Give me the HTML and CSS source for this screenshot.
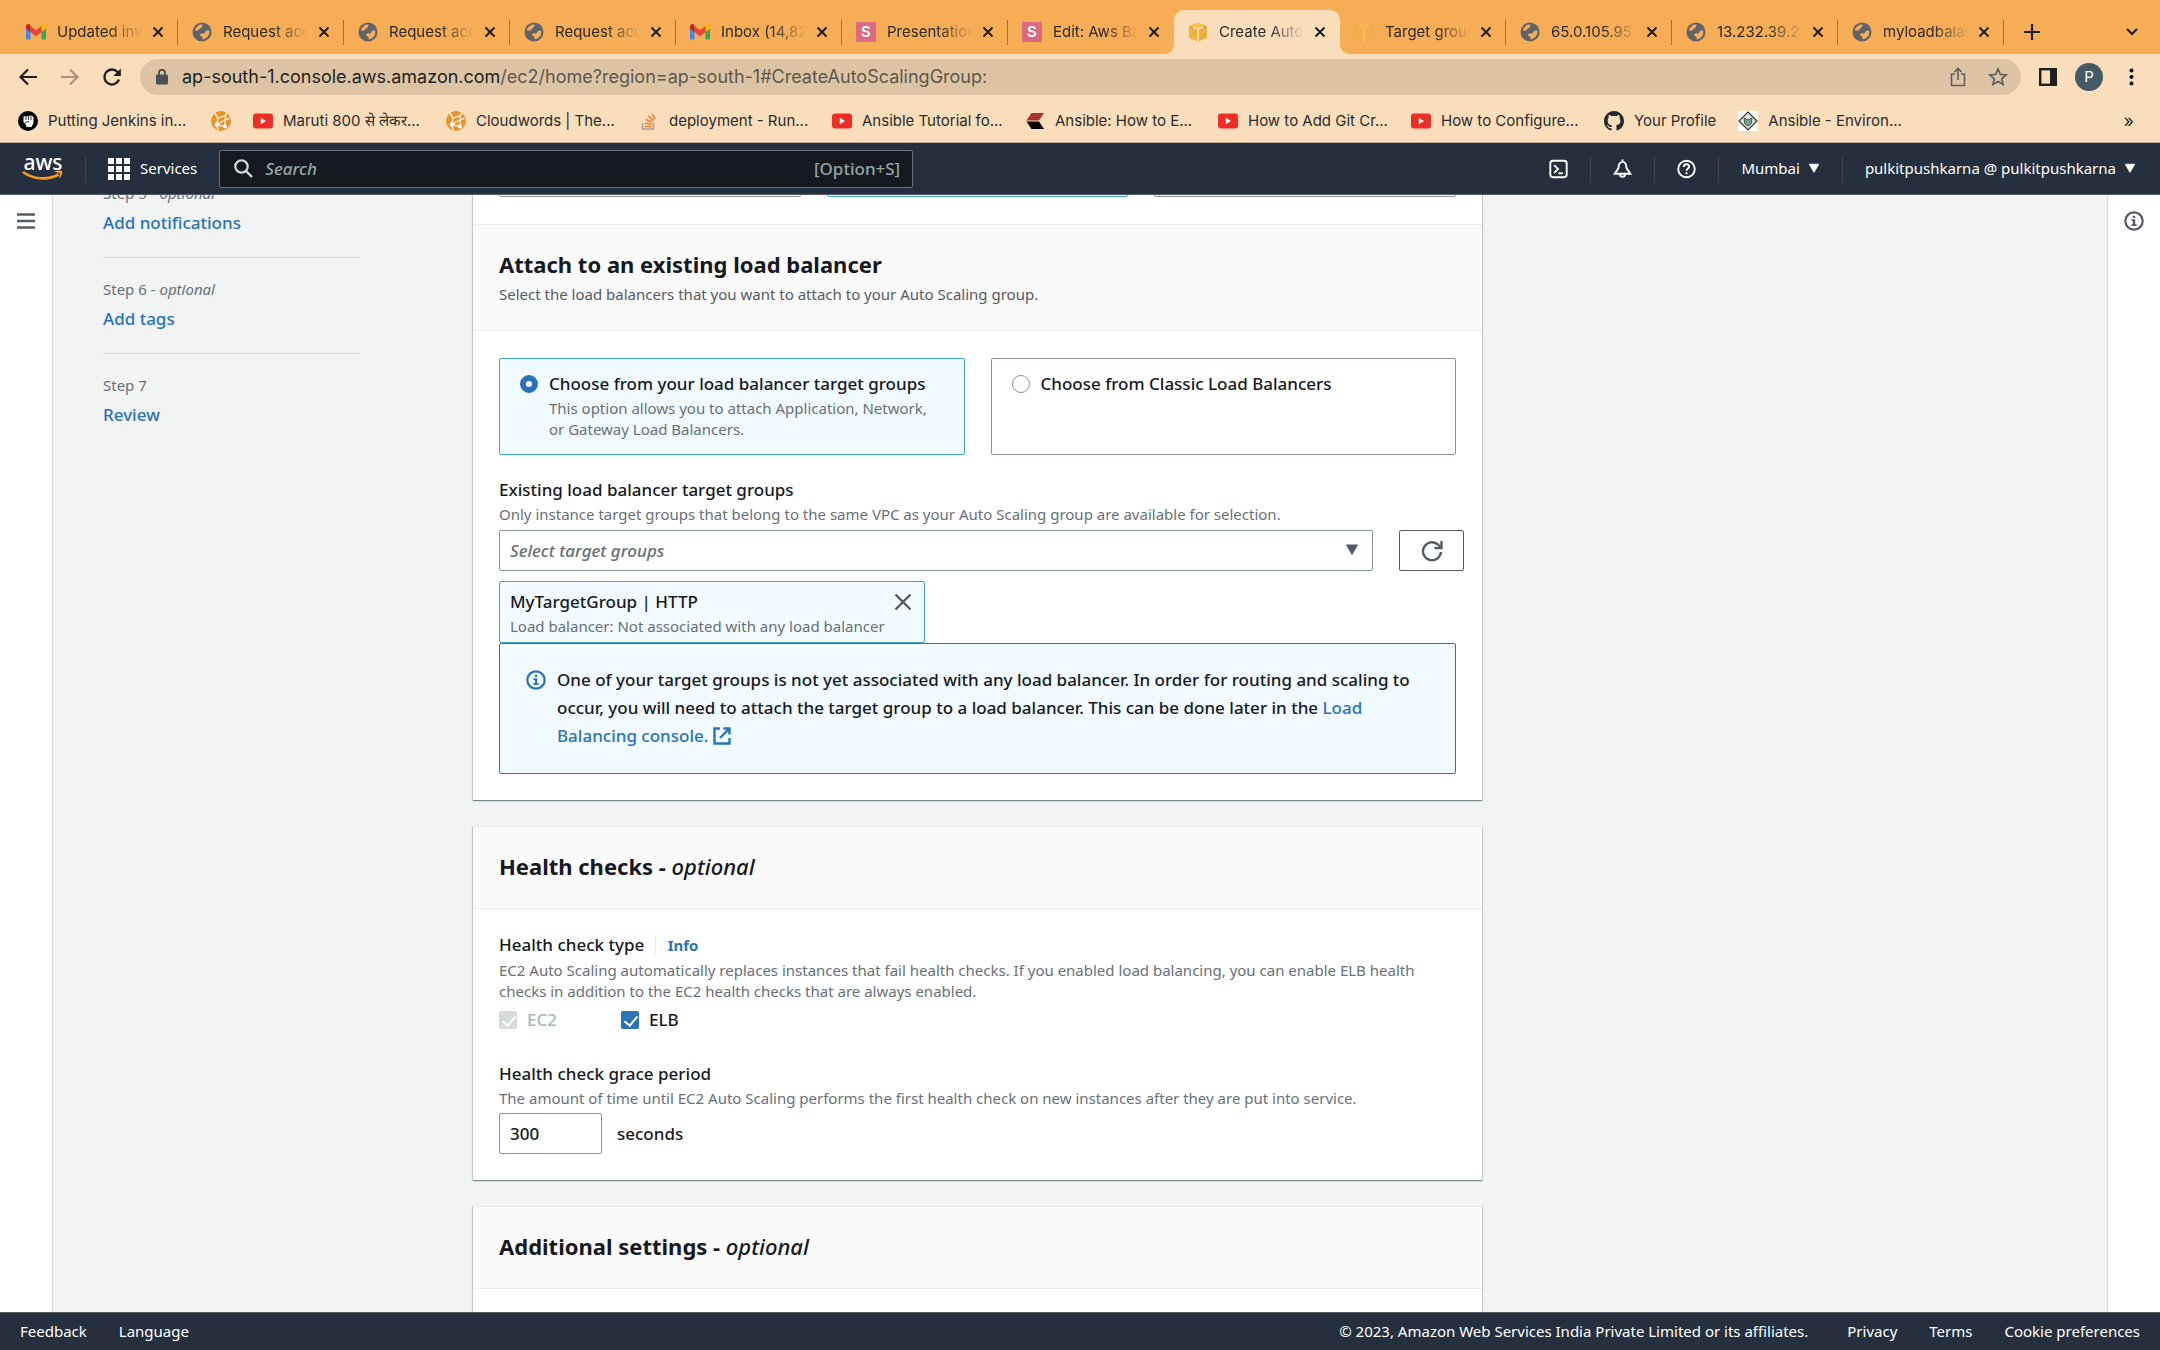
FILE: index.html
```html
<!DOCTYPE html>
<html lang="en">
<head>
    <meta charset="UTF-8">
    <meta name="viewport" content="width=device-width, initial-scale=1.0">
    <title>Create Auto Scaling group</title>
    <link rel="stylesheet" href="styles.css">
</head>
<body>
    <!-- shared icons -->
    <svg class="sprite" width="0" height="0">
        <symbol id="gmail" viewBox="0 0 20 16">
            <path d="M0 2.5V14a1.5 1.5 0 0 0 1.500 1.500H4.500V6z" fill="#4285f4"/>
            <path d="M20 2.500V14a1.500 1.500 0 0 1-1.500 1.500H15.500V6z" fill="#34a853"/>
            <path d="M15.500 2.500V8L20 4.600V2.500C20 .3 17.600-.6 16 .7z" fill="#fbbc04"/>
            <path d="M4.500 8V2L10 6.200 15.500 2v6L10 12.200z" fill="#ea4335"/>
            <path d="M0 2.500V4.600L4.500 8V2L4 .7C2.400-.6 0 .3 0 2.500z" fill="#c5221f"/>
        </symbol>
        <symbol id="globe" viewBox="0 0 20 20">
            <circle cx="10" cy="10" r="9.500" fill="#5f6368"/>
            <path d="M3 7.500c1.200-3 3.800-5 7-5 .8 0 1 .6.400 1.200-.9.900-.2 1.300-1.200 2.200-.8.700-1.900.4-2.200 1.500-.2.900-1 1.300-2 1.100-.9-.2-1.300-.1-2 .2z" fill="#f6ad55"/>
            <path d="M17.300 9c.5 3.700-2 7.300-6 8.200-1 .2-1.200-.5-.8-1.300.4-.9-.3-1.400-1.300-1.600-1.100-.3-1.300-1.300-.9-2.100.5-.9 1.700-1.100 2.800-.8 1 .3 1.600-.1 1.900-.9.400-1.200 1.200-1.900 2.400-2 .7-.1 1.500-.1 1.900.5z" fill="#f6ad55"/>
        </symbol>
        <symbol id="close" viewBox="0 0 12 12">
            <path d="M1.500 1.500l9 9M10.500 1.500l-9 9" stroke="#1f1f1f" stroke-width="2" fill="none"/>
        </symbol>
        <symbol id="cube" viewBox="0 0 20 20">
            <path d="M1 4.500l4-2v15l-4-2zM19 4.500l-4-2v15l4-2z" fill="#e2a336"/>
            <path d="M1 5l8.500 2.500v12L1 15.500zM19 5l-8.500 2.500v12l8.500-4z" fill="#ecb23f"/>
            <path d="M2 3.600L10 .5l8 3.100L10 6.300z" fill="#f3c14f"/>
            <path d="M10 7v12.500" stroke="#fadebb" stroke-width="1"/>
        </symbol>
        <symbol id="youtube" viewBox="0 0 20 16">
            <rect width="20" height="15" y=".5" rx="3" fill="#ee2d24"/>
            <path d="M7.800 4.800v6.400L13 8z" fill="#fff"/>
        </symbol>
        <symbol id="cloudwords" viewBox="0 0 20 20">
            <circle cx="10" cy="10" r="10" fill="#e3962f"/>
            <path d="M4 2.500L7 7l7-2 2-3M14 5l.5 3.500 4-1M7 7l-1 6.500M6 13.500L14.500 8.500M6 13.500l7.500 2L14.500 8.500M6 13.500l1 5.500" stroke="#fbe9d0" stroke-width="1.400" fill="none"/>
            <circle cx="6" cy="13.500" r="2.200" fill="#fff"/><circle cx="14" cy="15.500" r="2" fill="#fff"/>
        </symbol>
        <symbol id="info" viewBox="0 0 20 20">
            <circle cx="10" cy="10" r="8.700" fill="none" stroke="currentColor" stroke-width="2.200"/>
            <path d="M8.800 4.800h2.400v2.100H8.800zM7.500 8.300h3.700v5h1.400v1.700H7.400v-1.700h1.500V10H7.500z" fill="currentColor"/>
        </symbol>
        <symbol id="caret" viewBox="0 0 14 12">
            <path d="M1.500 1h11L7 10.500z" fill="currentColor" stroke="currentColor" stroke-width="1" stroke-linejoin="round"/>
        </symbol>
    </svg>

    <div class="tabs">
        <div class="tab"><svg class="fav"><use href="#gmail"/></svg><span class="tab-title">Updated invitation</span><button class="tab-close" aria-label="Close tab"><svg><use href="#close"/></svg></button></div>
        <div class="tab"><svg class="fav"><use href="#globe"/></svg><span class="tab-title">Request access</span><button class="tab-close" aria-label="Close tab"><svg><use href="#close"/></svg></button></div>
        <div class="tab"><svg class="fav"><use href="#globe"/></svg><span class="tab-title">Request access</span><button class="tab-close" aria-label="Close tab"><svg><use href="#close"/></svg></button></div>
        <div class="tab"><svg class="fav"><use href="#globe"/></svg><span class="tab-title">Request access</span><button class="tab-close" aria-label="Close tab"><svg><use href="#close"/></svg></button></div>
        <div class="tab"><svg class="fav"><use href="#gmail"/></svg><span class="tab-title">Inbox (14,82)</span><button class="tab-close" aria-label="Close tab"><svg><use href="#close"/></svg></button></div>
        <div class="tab"><span class="fav fav-s">S</span><span class="tab-title">Presentation</span><button class="tab-close" aria-label="Close tab"><svg><use href="#close"/></svg></button></div>
        <div class="tab tab-before"><span class="fav fav-s">S</span><span class="tab-title">Edit: Aws Ba</span><button class="tab-close" aria-label="Close tab"><svg><use href="#close"/></svg></button></div>
        <div class="tab tab-active"><svg class="fav"><use href="#cube"/></svg><span class="tab-title">Create Auto S</span><button class="tab-close" aria-label="Close tab"><svg><use href="#close"/></svg></button></div>
        <div class="tab"><svg class="fav fav-faded"><use href="#cube"/></svg><span class="tab-title">Target groups</span><button class="tab-close" aria-label="Close tab"><svg><use href="#close"/></svg></button></div>
        <div class="tab"><svg class="fav"><use href="#globe"/></svg><span class="tab-title">65.0.105.95</span><button class="tab-close" aria-label="Close tab"><svg><use href="#close"/></svg></button></div>
        <div class="tab"><svg class="fav"><use href="#globe"/></svg><span class="tab-title">13.232.39.2</span><button class="tab-close" aria-label="Close tab"><svg><use href="#close"/></svg></button></div>
        <div class="tab"><svg class="fav"><use href="#globe"/></svg><span class="tab-title">myloadbalancer</span><button class="tab-close" aria-label="Close tab"><svg><use href="#close"/></svg></button></div>
        <button class="new-tab" aria-label="New tab"><svg width="16" height="16" viewBox="0 0 16 16"><path d="M8 0v16M0 8h16" stroke="#1f1f1f" stroke-width="2.200"/></svg></button>
        <button class="tab-search" aria-label="Search tabs"><svg width="12" height="8" viewBox="0 0 12 8"><path d="M1 1l5 5 5-5" stroke="#1f1f1f" stroke-width="2.200" fill="none"/></svg></button>
    </div>

    <div class="toolbar">
        <div class="toolbar-nav">
            <button aria-label="Back"><svg width="20" height="20" viewBox="0 0 20 20"><path d="M19 10H3M10 2.500L2.500 10l7.500 7.500" stroke="#1f1f1f" stroke-width="2.200" fill="none"/></svg></button>
            <button aria-label="Forward"><svg width="20" height="20" viewBox="0 0 20 20"><path d="M1 10h16M10 2.500l7.500 7.500-7.500 7.500" stroke="#a89880" stroke-width="2.200" fill="none"/></svg></button>
            <button aria-label="Reload"><svg width="20" height="20" viewBox="0 0 20 20"><path d="M17 12.500A7.500 7.500 0 1 1 15.500 5L18 7.500" stroke="#1f1f1f" stroke-width="2.300" fill="none"/><path d="M18.800 1.500V9h-7.500z" fill="#1f1f1f"/></svg></button>
        </div>
        <div class="omnibox">
            <svg width="12" height="16" viewBox="0 0 12 16"><rect y="5.500" width="12" height="10" rx="1.500" fill="#4b4d50"/><path d="M3 6V3.800a3 3 0 0 1 6 0V6" stroke="#4b4d50" stroke-width="1.800" fill="none"/></svg>
            <span class="url"><b>ap-south-1.console.aws.amazon.com</b>/ec2/home?region=ap-south-1#CreateAutoScalingGroup:</span>
            <svg width="16" height="20" viewBox="0 0 16 20"><path d="M5 7H1.500v11.500h13V7H11M8 13V2M4.500 5L8 1.500 11.500 5" stroke="#5f5f5f" stroke-width="1.600" fill="none"/></svg>
            <svg width="20" height="20" viewBox="0 0 20 20"><path d="M10 2l2.300 5.400 5.900.5-4.500 3.900 1.400 5.700-5.100-3.100-5.100 3.100 1.400-5.700L1.800 7.900l5.900-.5z" stroke="#5f5f5f" stroke-width="1.700" fill="none"/></svg>
        </div>
        <button aria-label="Side panel"><svg width="18" height="18" viewBox="0 0 18 18"><rect x="1.200" y="1.200" width="15.600" height="15.600" fill="none" stroke="#1f1f1f" stroke-width="2.400"/><path d="M11 1h6v16h-6z" fill="#1f1f1f"/></svg></button>
        <button class="avatar" aria-label="Profile">P</button>
        <button class="menu" aria-label="Menu"><svg width="5" height="18" viewBox="0 0 5 18"><circle cx="2.500" cy="2.500" r="2"/><circle cx="2.500" cy="9" r="2"/><circle cx="2.500" cy="15.500" r="2"/></svg></button>
    </div>

    <div class="bookmarks">
        <a href="#" class="bookmark bookmark-long"><svg class="fav" viewBox="0 0 20 20"><circle cx="10" cy="10" r="10"/><path d="M5.500 5.500l8-1 2 1.500v6l-2 4h-5l-1-3-2-2z" fill="#fff"/><path d="M8 5v4M10.500 5v4M13 5v4M7 11.500l4-1" stroke="#000" stroke-width=".8"/></svg>Putting Jenkins in...</a>
        <a href="#" class="bookmark" aria-label="Cloudwords"><svg class="fav"><use href="#cloudwords"/></svg></a>
        <a href="#" class="bookmark bookmark-long"><svg class="fav"><use href="#youtube"/></svg>Maruti 800 से लेकर...</a>
        <a href="#" class="bookmark bookmark-long"><svg class="fav"><use href="#cloudwords"/></svg>Cloudwords | The...</a>
        <a href="#" class="bookmark bookmark-long"><svg class="fav" viewBox="0 0 20 20"><path d="M3.500 12v6h11v-6" stroke="#a3a3a0" stroke-width="1.600" fill="none"/><path d="M5.500 15.500h7M5.800 12.300l6.900 1M7 8.500l6.500 2.700M9.500 5l5 4.700M13 2.500l3 6" stroke="#f08030" stroke-width="1.600"/></svg>deployment - Run...</a>
        <a href="#" class="bookmark bookmark-long"><svg class="fav"><use href="#youtube"/></svg>Ansible Tutorial fo...</a>
        <a href="#" class="bookmark bookmark-long"><svg class="fav" viewBox="0 0 20 20"><path d="M6.500 2H19l-5 7.500H1.500z" fill="#a8322f"/><path d="M1.500 10.500H14l5 7.500H6.500z"/></svg>Ansible: How to E...</a>
        <a href="#" class="bookmark bookmark-long"><svg class="fav"><use href="#youtube"/></svg>How to Add Git Cr...</a>
        <a href="#" class="bookmark bookmark-long"><svg class="fav"><use href="#youtube"/></svg>How to Configure...</a>
        <a href="#" class="bookmark"><svg class="fav" viewBox="0 0 16 16"><path fill="#24292f" d="M8 0C3.580 0 0 3.580 0 8c0 3.540 2.290 6.530 5.470 7.590.4.070.55-.17.55-.38 0-.19-.01-.82-.01-1.490-2.010.37-2.530-.49-2.690-.94-.09-.23-.48-.94-.82-1.130-.28-.15-.68-.52-.01-.53.63-.01 1.080.58 1.230.82.72 1.210 1.870.87 2.330.66.07-.52.28-.87.51-1.070-1.780-.2-3.640-.89-3.640-3.950 0-.87.31-1.590.82-2.150-.08-.2-.36-1.020.08-2.120 0 0 .67-.21 2.200.82a7.600 7.600 0 0 1 4 0c1.530-1.040 2.200-.82 2.200-.82.44 1.100.16 1.920.08 2.120.51.560.82 1.270.82 2.150 0 3.070-1.870 3.750-3.650 3.950.29.25.54.73.54 1.480 0 1.070-.01 1.930-.01 2.200 0 .21.15.46.55.38A8 8 0 0 0 16 8c0-4.420-3.580-8-8-8z"/></svg>Your Profile</a>
        <a href="#" class="bookmark"><svg class="fav" viewBox="0 0 20 20"><path d="M0 0h20v20H0z" fill="#fff"/><path d="M10 1l9 9-9 9-9-9z" fill="#dfe5e0" stroke="#333" stroke-width="1.200"/><path d="M6 7l4 2 4-2-1 6-3 2-3-2z" fill="#7fa58a" stroke="#3d5a46" stroke-width="1"/></svg>Ansible - Environ...</a>
        <span class="more">»</span>
    </div>

    <header class="nav">
        <a href="#" class="logo" aria-label="AWS">
            <span class="logo-text">aws</span>
            <svg width="42" height="13" viewBox="0 0 42 13"><path d="M1 2c10 7.500 25 8.500 35.500 2.500" stroke="#f79a1f" stroke-width="2.600" fill="none"/><path d="M32 2c3-1.500 6.500-1.700 8-1 .8 1.800-.5 5.500-3 8 .3-2 1-4.500.6-5.700C36.500 2.500 34 2.500 32 2z" fill="#f79a1f"/></svg>
        </a>
        <button class="nav-item services">
            <svg width="22" height="22" viewBox="0 0 22 22" fill="#fff"><path d="M0 0h6v6H0zM8 0h6v6H8zM16 0h6v6h-6zM0 8h6v6H0zM8 8h6v6H8zM16 8h6v6h-6zM0 16h6v6H0zM8 16h6v6H8zM16 16h6v6h-6z"/></svg>
            Services
        </button>
        <label class="search">
            <svg width="19" height="19" viewBox="0 0 19 19"><circle cx="7.500" cy="7.500" r="6.200" stroke="#d5dbdb" stroke-width="2.200" fill="none"/><path d="M12 12l6 6" stroke="#d5dbdb" stroke-width="2.400"/></svg>
            <input type="text" placeholder="Search" aria-label="Search">
            <span>[Option+S]</span>
        </label>
        <div class="nav-right">
            <button class="nav-item nav-icon" aria-label="CloudShell"><svg width="22" height="22" viewBox="0 0 22 22" fill="none" stroke="#fff" stroke-width="2.200"><rect x="1.500" y="1.500" width="19" height="19" rx="3"/><path d="M6 6.500l4.500 4.500L6 15.500M11 16h5"/></svg></button>
            <button class="nav-item nav-icon" aria-label="Notifications"><svg width="22" height="22" viewBox="0 0 22 22" fill="none" stroke="#fff" stroke-width="2.200"><path d="M11 2.500C7.500 3 6.500 5.500 6.300 10L2 16.500h18L15.700 10C15.500 5.500 14.500 3 11 2.500zM11 0v3M8 17c0 4 6 4 6 0"/></svg></button>
            <button class="nav-item nav-icon" aria-label="Help"><svg width="22" height="22" viewBox="0 0 22 22" fill="none" stroke="#fff" stroke-width="2.200"><circle cx="11" cy="11" r="9.600"/><path d="M7.800 8.500c.2-4.200 6.500-3.800 6.300-.2-.2 2.300-3.100 2-3.100 4.700M11 14.700v2.300"/></svg></button>
            <button class="nav-item">Mumbai <svg class="caret"><use href="#caret"/></svg></button>
            <button class="nav-item">pulkitpushkarna @ pulkitpushkarna <svg class="caret"><use href="#caret"/></svg></button>
        </div>
    </header>

    <div class="content">
        <aside class="rail rail-left">
            <button aria-label="Open navigation"><svg width="18" height="16" viewBox="0 0 18 16"><path d="M0 1.500h18M0 8h18M0 14.500h18" stroke="#545b64" stroke-width="2.600"/></svg></button>
        </aside>
        <div class="scroller">
            <div class="page">
                <nav class="steps">
                    <div class="step"><small>Step 5 - <em>optional</em></small><a href="#">Add notifications</a></div>
                    <div class="step"><small>Step 6 - <em>optional</em></small><a href="#">Add tags</a></div>
                    <div class="step"><small>Step 7</small><a href="#">Review</a></div>
                </nav>
                <main>
                    <section class="card">
                        <div class="cut-tiles"><div></div><div class="selected"></div><div></div></div>
                        <div class="card-header">
                            <h2>Attach to an existing load balancer</h2>
                            <p>Select the load balancers that you want to attach to your Auto Scaling group.</p>
                        </div>
                        <div class="card-body body-tiles">
                            <div class="tiles">
                                <label class="tile selected">
                                    <input type="radio" name="lb" checked>
                                    <span><span class="label">Choose from your load balancer target groups</span><span class="hint">This option allows you to attach Application, Network,<br>or Gateway Load Balancers.</span></span>
                                </label>
                                <label class="tile">
                                    <input type="radio" name="lb">
                                    <span><span class="label">Choose from Classic Load Balancers</span></span>
                                </label>
                            </div>
                            <label class="label" for="groups">Existing load balancer target groups</label>
                            <p class="hint">Only instance target groups that belong to the same VPC as your Auto Scaling group are available for selection.</p>
                            <div class="select-row">
                                <div class="select">
                                    <select id="groups"><option>Select target groups</option></select>
                                    <svg class="caret"><use href="#caret"/></svg>
                                </div>
                                <button class="refresh" aria-label="Refresh"><svg width="22" height="22" viewBox="0 0 22 22"><path d="M20 12a9 9 0 1 1-3-7.500L19.500 7" stroke="#545b64" stroke-width="2.400" fill="none"/><path d="M20.500 1v7H13.500" stroke="#545b64" stroke-width="2.400" fill="none"/></svg></button>
                            </div>
                            <div class="token">
                                <div><span class="label">MyTargetGroup | HTTP</span><span class="hint">Load balancer: Not associated with any load balancer</span></div>
                                <button aria-label="Remove MyTargetGroup"><svg width="18" height="18" viewBox="0 0 18 18"><path d="M1.500 1.500l15 15M16.500 1.500l-15 15" stroke="#545b64" stroke-width="2.400"/></svg></button>
                            </div>
                            <div class="alert">
                                <svg class="alert-icon"><use href="#info"/></svg>
                                <p>One of your target groups is not yet associated with any load balancer. In order for routing and scaling to<br>occur, you will need to attach the target group to a load balancer. This can be done later in the <a href="#">Load<br>Balancing console. <svg class="external" viewBox="0 0 18 18" fill="none" stroke="currentColor" stroke-width="2.400"><path d="M7 1.500H1.500v15h15V11M10.500 1.500h6v6M16.500 1.500L7 11"/></svg></a></p>
                            </div>
                        </div>
                    </section>

                    <section class="card">
                        <div class="card-header"><h2>Health checks - <em>optional</em></h2></div>
                        <div class="card-body">
                            <div class="label with-info">Health check type <a href="#">Info</a></div>
                            <p class="hint">EC2 Auto Scaling automatically replaces instances that fail health checks. If you enabled load balancing, you can enable ELB health<br>checks in addition to the EC2 health checks that are always enabled.</p>
                            <div class="checks">
                                <label class="check disabled"><input type="checkbox" checked disabled> EC2</label>
                                <label class="check"><input type="checkbox" checked> ELB</label>
                            </div>
                            <label class="label" for="grace">Health check grace period</label>
                            <p class="hint">The amount of time until EC2 Auto Scaling performs the first health check on new instances after they are put into service.</p>
                            <div class="grace"><input type="text" id="grace" value="300"> seconds</div>
                        </div>
                    </section>

                    <section class="card">
                        <div class="card-header"><h2>Additional settings - <em>optional</em></h2></div>
                        <div class="card-body"></div>
                    </section>
                </main>
            </div>
        </div>
        <aside class="rail rail-right">
            <button aria-label="Open help panel"><svg class="rail-info"><use href="#info"/></svg></button>
        </aside>
    </div>

    <footer class="footer">
        <a href="#">Feedback</a>
        <a href="#">Language</a>
        <span class="copyright">© 2023, Amazon Web Services India Private Limited or its affiliates.</span>
        <a href="#">Privacy</a>
        <a href="#">Terms</a>
        <a href="#">Cookie preferences</a>
    </footer>
</body>
</html>
```

FILE: styles.css
```css
* {
    box-sizing: border-box;
}

body {
    margin: 0;
    height: 100vh;
    display: flex;
    flex-direction: column;
    overflow: hidden;
    font-family: "Noto Sans", "Open Sans", sans-serif;
    font-size: 17px;
    font-weight: 500;
    line-height: 25px;
    color: #16191f;
    background: #f2f3f3;
}

a {
    color: #0073bb;
    text-decoration: none;
}

button {
    display: flex;
    align-items: center;
    justify-content: center;
    padding: 0;
    border: 0;
    background: none;
    font: inherit;
    color: inherit;
}

h2, p {
    margin: 0;
}

.sprite {
    position: absolute;
}

/* browser window */
.tabs, .toolbar, .bookmarks {
    display: flex;
    align-items: center;
    flex: none;
    font-family: Inter, "Liberation Sans", sans-serif;
    font-size: 15px;
    font-weight: 400;
    line-height: 20px;
    color: #2b2b2b;
}

.tabs {
    height: 54px;
    padding: 10px 22px 0 12px;
    background: #f6ad55;
}

.tab {
    position: relative;
    display: flex;
    align-items: center;
    width: 166px;
    height: 44px;
    padding: 0 14px;
}

.tab::after {
    content: "";
    position: absolute;
    right: 0;
    top: 10px;
    width: 1px;
    height: 25px;
    background: #a0743d;
}

.tab-before::after, .tab-active::after {
    display: none;
}

.tab-active {
    background: #fadebb;
    border-radius: 10px 10px 0 0;
}

.tab-active::before {
    content: "";
    position: absolute;
    left: -10px;
    right: -10px;
    bottom: 0;
    height: 10px;
    background:
        radial-gradient(circle at 0 0, transparent 10px, #fadebb 10px) left / 10px 10px no-repeat,
        radial-gradient(circle at 100% 0, transparent 10px, #fadebb 10px) right / 10px 10px no-repeat;
}

.fav {
    flex: none;
    width: 20px;
    height: 20px;
}

.fav-s {
    background: #db6a80;
    color: #fff;
    font-weight: 600;
    text-align: center;
}

.fav-faded {
    opacity: 0.5;
}

.tab-title {
    flex: 1;
    margin: 0 10px 0 11px;
    overflow: hidden;
    white-space: nowrap;
    mask-image: linear-gradient(to right, #000 60%, transparent);
}

.tab-close svg {
    width: 12px;
    height: 12px;
}

.new-tab {
    margin-left: 20px;
}

.tab-search {
    margin-left: auto;
}

.toolbar {
    height: 46px;
    gap: 18px;
    padding: 0 26px 0 18px;
    background: #fadebb;
}

.toolbar-nav {
    display: flex;
    gap: 22px;
}

.omnibox {
    flex: 1;
    display: flex;
    align-items: center;
    gap: 22px;
    height: 36px;
    padding: 0 13px 0 16px;
    border-radius: 18px;
    background: #dcc4a5;
}

.url {
    flex: 1;
    margin-left: -8px;
    font-size: 18px;
    color: #5f574c;
}

.url b {
    font-weight: 400;
    color: #1f1f1f;
}

.avatar {
    width: 28px;
    height: 28px;
    border-radius: 50%;
    background: #455a64;
    color: #fff;
}

.menu {
    margin-left: 8px;
}

.bookmarks {
    height: 43px;
    gap: 22px;
    padding: 0 26px 0 18px;
    border-bottom: 1px solid #b8a88c;
    background: #fadebb;
}

.bookmark {
    display: flex;
    align-items: center;
    gap: 10px;
    color: #2b2b2b;
    white-space: nowrap;
}

.bookmark-long {
    width: 171px;
}

.more {
    margin-left: auto;
    font-size: 18px;
}

/* console header */
.nav {
    flex: none;
    display: flex;
    align-items: center;
    height: 52px;
    padding: 0 2px 0 22px;
    border-bottom: 1px solid #545b64;
    background: #252f3e;
    color: #fff;
    font-size: 15px;
    font-weight: 400;
}

.logo {
    display: flex;
    flex-direction: column;
    align-items: center;
    width: 64px;
    padding-right: 21px;
    border-right: 1px solid #3b4554;
    color: #fff;
}

.logo-text {
    font-size: 21px;
    font-weight: 500;
    line-height: 15px;
}

.nav-item {
    height: 28px;
    gap: 8px;
    padding: 0 22px;
    border-right: 1px solid #3b4554;
}

.nav-item:last-child, .services {
    border-right: 0;
}

.services {
    gap: 10px;
}

.nav-icon {
    width: 64px;
}

.nav .caret {
    width: 12px;
    height: 11px;
}

.search {
    display: flex;
    align-items: center;
    gap: 12px;
    width: 694px;
    height: 38px;
    padding: 0 12px 0 14px;
    border: 1px solid #687078;
    border-radius: 2px;
    background: #16191f;
    color: #95a5a6;
    font-size: 17px;
    font-weight: 500;
}

.search input {
    flex: 1;
    padding: 0;
    border: 0;
    background: none;
    font: inherit;
}

.search input::placeholder {
    color: #95a5a6;
    font-style: italic;
}

.nav-right {
    display: flex;
    margin-left: auto;
}

/* console page */
.content {
    flex: 1;
    min-height: 0;
    display: flex;
}

.rail {
    flex: none;
    display: flex;
    align-items: flex-start;
    justify-content: center;
    width: 53px;
    padding-top: 16px;
    background: #fff;
    color: #545b64;
}

.rail-left {
    padding-top: 18px;
    border-right: 1px solid #d5dbdb;
}

.rail-right {
    border-left: 1px solid #d5dbdb;
}

.rail-info, .alert-icon {
    width: 20px;
    height: 20px;
}

.scroller {
    flex: 1;
    overflow: hidden;
}

.page {
    display: grid;
    grid-template-columns: 257px minmax(0, 1009px);
    gap: 113px;
    margin-top: -16px;
    padding-left: 50px;
}

.steps {
    padding-top: 4px;
}

.step {
    display: flex;
    flex-direction: column;
    gap: 7px;
    padding-bottom: 21px;
    margin-bottom: 21px;
    border-bottom: 1px solid #d5dbdb;
    line-height: 26px;
}

.step:last-child {
    border-bottom: 0;
}

.step small {
    font-size: 15px;
    font-weight: 400;
    line-height: 20px;
    color: #687078;
}

.card {
    margin-bottom: 26px;
    background: #fff;
    box-shadow: 0 1px 1px rgba(0, 28, 36, 0.3), 1px 1px 1px rgba(0, 28, 36, 0.15), -1px 1px 1px rgba(0, 28, 36, 0.15);
}

.cut-tiles {
    display: grid;
    grid-template-columns: repeat(3, 1fr);
    gap: 26px;
    height: 45px;
    padding: 0 26px 27px;
}

.cut-tiles div {
    border: 1px solid #879596;
    border-radius: 2px;
}

.card-header {
    padding: 22px 26px 25px;
    border: 1px solid #eaeded;
    border-width: 1px 0;
    background: #fafafa;
}

.card-header h2 {
    font-size: 22px;
    line-height: 34px;
    font-weight: 700;
}

.card-header em {
    font-weight: 500;
}

.card-header p {
    margin-top: 3px;
    font-size: 15px;
    font-weight: 400;
    line-height: 21px;
    color: #545b64;
}

.card-body {
    padding: 23px 26px 26px;
}

.body-tiles {
    padding-top: 27px;
}

.tiles {
    display: grid;
    grid-template-columns: 1fr 1fr;
    gap: 26px;
    margin-bottom: 22px;
}

.tile {
    display: flex;
    gap: 11px;
    padding: 12px 19px 14px 20px;
    border: 1px solid #879596;
    border-radius: 2px;
}

.tiles .selected, .cut-tiles .selected {
    border-color: #41a3cf;
    background: #f1faff;
}

.tile input {
    appearance: none;
    flex: none;
    width: 18px;
    height: 18px;
    margin: 4px 0;
    border: 1px solid #879596;
    border-radius: 50%;
    background: #fff;
}

.tile input:checked {
    border: 6px solid #2b72b9;
}

.label, .hint {
    display: block;
}

.hint {
    margin-top: 2px;
    font-size: 15px;
    font-weight: 400;
    line-height: 21px;
    color: #687078;
}

.select-row {
    display: flex;
    gap: 26px;
    margin: 5px -8px 10px 0;
}

.select {
    position: relative;
    flex: 1;
}

.select select {
    appearance: none;
    display: block;
    width: 100%;
    height: 41px;
    padding: 0 10px;
    border: 1px solid #879596;
    border-radius: 2px;
    background: #fff;
    font: inherit;
    font-style: italic;
    color: #687078;
}

.select .caret {
    position: absolute;
    right: 14px;
    top: 14px;
    width: 14px;
    height: 12px;
    color: #545b64;
}

.refresh {
    width: 65px;
    height: 41px;
    border: 1px solid #545b64;
    border-radius: 2px;
}

.token {
    display: flex;
    align-items: flex-start;
    justify-content: space-between;
    width: 426px;
    padding: 7px 12px 5px 10px;
    border: 1px solid #41a3cf;
    border-radius: 2px;
    background: #f1faff;
}

.token button {
    height: 26px;
}

.alert {
    display: flex;
    gap: 11px;
    padding: 22px 26px 23px;
    border: 1px solid #2b72b9;
    border-radius: 2px;
    background: #f1faff;
    line-height: 28px;
}

.alert-icon {
    flex: none;
    margin-top: 4px;
    color: #2b72b9;
}

.external {
    width: 18px;
    height: 18px;
    vertical-align: -3px;
}

.card a, .step a {
    color: #2b72b9;
}

.with-info a {
    margin-left: 6px;
    padding-left: 12px;
    border-left: 1px solid #eaeded;
    font-size: 15px;
    font-weight: 700;
}

.checks {
    display: flex;
    margin: 5px 0 29px;
}

.check {
    display: flex;
    align-items: center;
    gap: 10px;
    width: 122px;
}

.disabled {
    color: #aab7b8;
}

.check input {
    appearance: none;
    width: 18px;
    height: 18px;
    margin: 0;
    border-radius: 2px;
    background: #2b72b9;
}

.check input::before {
    content: "";
    display: block;
    width: 6px;
    height: 11px;
    margin: 2px 6px;
    border: solid #fff;
    border-width: 0 2px 2px 0;
    transform: rotate(40deg);
}

.check input:disabled {
    background: #d5dbdb;
}

.grace {
    display: flex;
    align-items: center;
    gap: 15px;
    margin-top: 4px;
}

.grace input {
    width: 103px;
    height: 41px;
    padding: 0 10px;
    border: 1px solid #879596;
    border-radius: 2px;
    font: inherit;
    color: inherit;
}

.footer {
    flex: none;
    display: flex;
    align-items: center;
    gap: 32px;
    height: 38px;
    padding: 0 20px;
    border-top: 1px solid #545b64;
    background: #252f3e;
    color: #fff;
    font-size: 15px;
    font-weight: 400;
}

.footer a {
    color: #fff;
}

.copyright {
    margin-left: auto;
    margin-right: 7px;
}
```
